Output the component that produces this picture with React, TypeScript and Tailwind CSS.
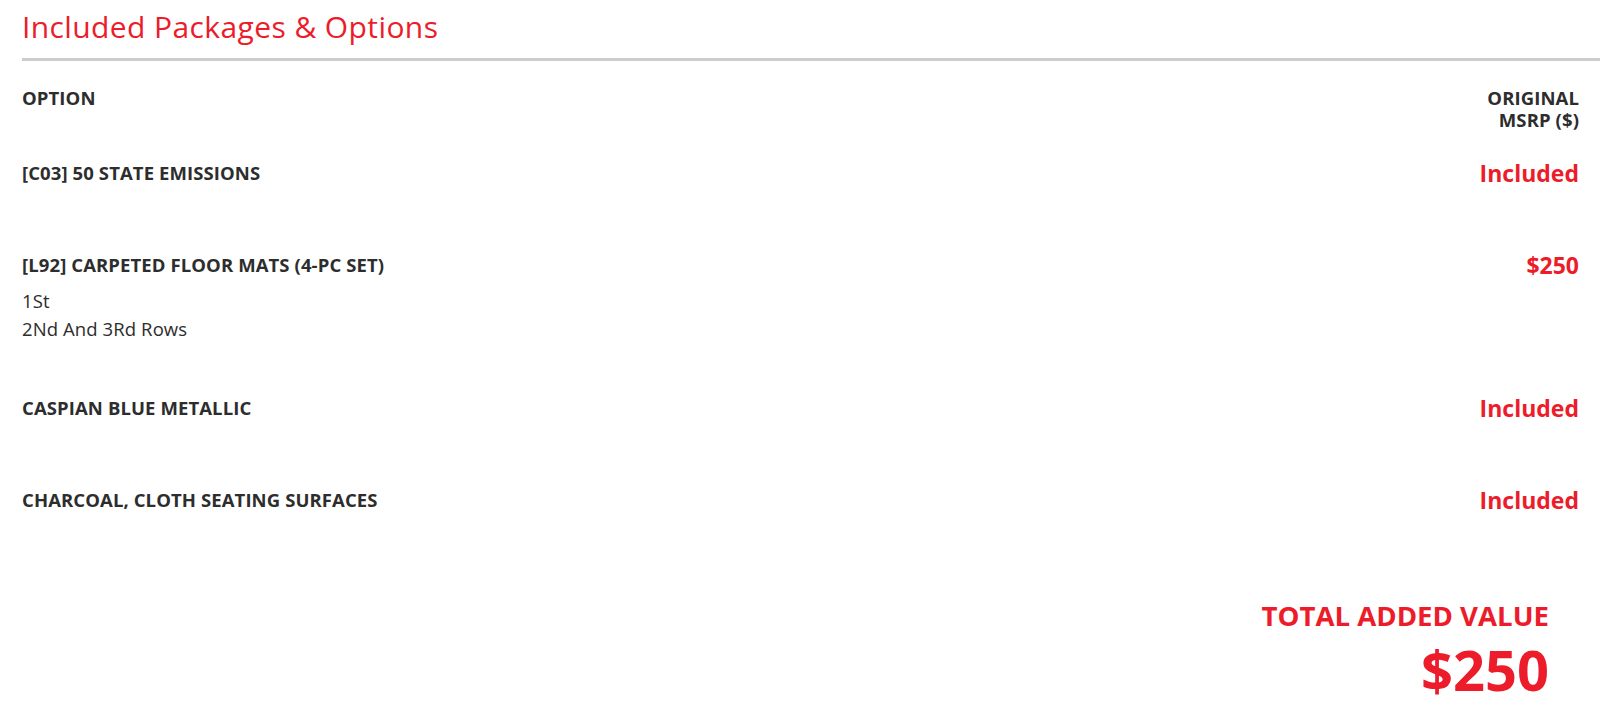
const options = [
  { name: "[C03] 50 STATE EMISSIONS", price: "Included", details: [] as string[] },
  { name: "[L92] CARPETED FLOOR MATS (4-PC SET)", price: "$250", details: ["1St", "2Nd And 3Rd Rows"] },
  { name: "CASPIAN BLUE METALLIC", price: "Included", details: [] as string[] },
  { name: "CHARCOAL, CLOTH SEATING SURFACES", price: "Included", details: [] as string[] },
];

export default function App() {
  return (
    <div className="min-h-screen bg-white pl-[22px] font-['Open_Sans',sans-serif] text-[#2d2d2d]">
      <h1 className="pt-[8px] text-[30px] leading-[38px] tracking-[0.4px] text-[#ec1c2a]">
        Included Packages &amp; Options
      </h1>
      <div className="mt-[12px] h-[3px] bg-[#cccccc]" />

      <div className="pr-[21px]">
        <div className="mt-[26px] flex justify-between text-[18.5px] font-bold leading-[22px] tracking-[0.1px]">
          <span>OPTION</span>
          <span className="text-right">
            ORIGINAL
            <br />
            MSRP ($)
          </span>
        </div>

        <div className="mt-[30px] flex flex-col">
          {options.map((o, i) => (
            <div
              key={o.name}
              className={i === options.length - 1 ? "" : o.details.length > 0 ? "mb-[53px]" : "mb-[67.5px]"}
            >
              <div className="flex items-center justify-between">
                <span className="text-[18.5px] font-bold leading-[24px] tracking-[0.1px]">{o.name}</span>
                <span className="text-[23px] font-bold leading-[24px] text-[#ec1c2a]">{o.price}</span>
              </div>
              {o.details.length > 0 && (
                <div className="mt-[10.7px] text-[18.5px] leading-[28px] tracking-[0.1px]">
                  {o.details.map((d) => (
                    <div key={d}>{d}</div>
                  ))}
                </div>
              )}
            </div>
          ))}
        </div>

        <div className="mt-[86px] flex flex-col items-end pr-[30px] font-bold text-[#ec1c2a]">
          <span className="text-[27.6px] leading-[34px]">TOTAL ADDED VALUE</span>
          <span className="mt-[6px] text-[56px] leading-[62px]">$250</span>
        </div>
      </div>
    </div>
  );
}
